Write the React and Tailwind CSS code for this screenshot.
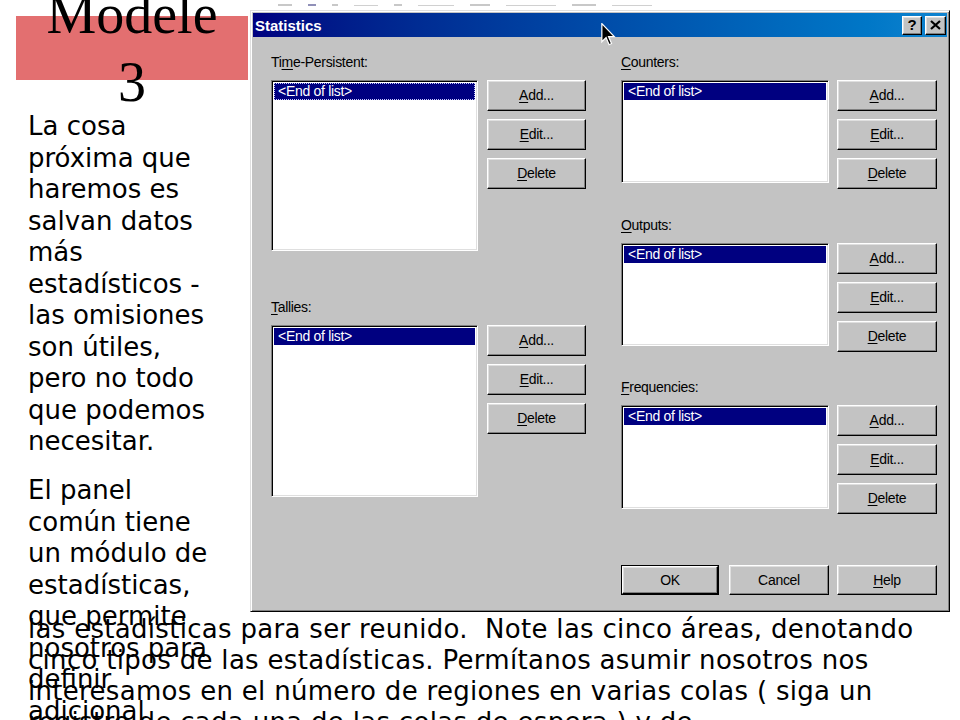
import React from "react";

const bevelBtn =
  "flex items-center justify-center bg-[#c3c3c3] border border-t-white border-l-white border-r-black border-b-black shadow-[inset_-1px_-1px_0_#808080,inset_1px_1px_0_#dfdfdf] text-[14px] text-black tracking-[-0.3px]";

// underline one letter of a label, the way Win9x marks its access keys
function Key({ text, at }) {
  if (at == null) return <span>{text}</span>;
  return (
    <span>
      {text.slice(0, at)}
      <span className="underline underline-offset-2">{text[at]}</span>
      {text.slice(at + 1)}
    </span>
  );
}

function Btn({ text, at, w = "w-[99px]", h = "h-[31px]" }) {
  return (
    <div className={`${bevelBtn} ${w} ${h}`}>
      <Key text={text} at={at} />
    </div>
  );
}

function ListBox({ w, h, focus }) {
  return (
    <div
      className={`${w} ${h} bg-white border border-t-[#808080] border-l-[#808080] border-r-white border-b-white shadow-[inset_1px_1px_0_#000,inset_-1px_-1px_0_#dfdfdf] p-[2px]`}
    >
      <div
        className={`h-[17px] bg-[#000080] text-white text-[14px] leading-[15px] pl-[3px] tracking-[-0.3px] border ${
          focus ? "border-dotted border-[#c8c8ff]" : "border-[#000080]"
        }`}
      >
        {"<End of list>"}
      </div>
    </div>
  );
}

function Section({ label, at, listW, listH, gap, btnW, focus, className = "" }) {
  return (
    <div className={className}>
      <div className="h-[16px] text-[14px] leading-[16px] tracking-[-0.3px] text-black">
        <Key text={label} at={at} />
      </div>
      <div className={`mt-[10px] flex items-start ${gap}`}>
        <ListBox w={listW} h={listH} focus={focus} />
        <div className="flex flex-col gap-[8px]">
          <Btn text="Add..." at={0} w={btnW} />
          <Btn text="Edit..." at={0} w={btnW} />
          <Btn text="Delete" at={0} w={btnW} />
        </div>
      </div>
    </div>
  );
}

function Dialog() {
  return (
    <div className="w-[700px] h-[602px] ml-[2px] bg-[#c3c3c3] border border-t-[#dfdfdf] border-l-[#dfdfdf] border-r-black border-b-black shadow-[inset_1px_1px_0_#fff,inset_-1px_-1px_0_#808080] p-[2px] flex flex-col font-['Liberation_Sans',Arial,sans-serif]">
      <div className="h-[24px] shrink-0 bg-gradient-to-r from-[#000080] to-[#1084d0] flex items-center justify-between pl-[2px] pr-[1px]">
        <span className="text-white font-bold text-[15px] leading-none">Statistics</span>
        <div className="flex gap-[3px]">
          <div className={`${bevelBtn} w-[20px] h-[19px] font-bold text-[15px]`}>?</div>
          <div className={`${bevelBtn} w-[21px] h-[19px]`}>
            <svg width="11" height="10" viewBox="0 0 11 10">
              <path d="M1 1 L10 9 M10 1 L1 9" stroke="#000" strokeWidth="2.2" />
            </svg>
          </div>
        </div>
      </div>

      <div className="flex gap-[35px] pl-[18px] pt-[17px]">
        <div className="flex flex-col">
          <Section label="Time-Persistent:" at={2} listW="w-[207px]" listH="h-[171px]" gap="gap-[9px]" btnW="w-[99px]" focus />
          <Section label="Tallies:" at={0} listW="w-[207px]" listH="h-[172px]" gap="gap-[9px]" btnW="w-[99px]" className="mt-[48px]" />
        </div>
        <div className="flex flex-col">
          <Section label="Counters:" at={0} listW="w-[208px]" listH="h-[103px]" gap="gap-[8px]" btnW="w-[100px]" />
          <Section label="Outputs:" at={0} listW="w-[208px]" listH="h-[103px]" gap="gap-[8px]" btnW="w-[100px]" className="mt-[28px]" />
          <Section label="Frequencies:" at={0} listW="w-[208px]" listH="h-[104px]" gap="gap-[8px]" btnW="w-[100px]" className="mt-[27px]" />
          <div className="mt-[51px] flex">
            <div className="border border-black">
              <Btn text="OK" w="w-[96px]" h="h-[28px]" />
            </div>
            <div className="ml-[10px]">
              <Btn text="Cancel" w="w-[100px]" h="h-[30px]" />
            </div>
            <div className="ml-[8px]">
              <Btn text="Help" at={0} w="w-[100px]" h="h-[30px]" />
            </div>
          </div>
        </div>
      </div>
    </div>
  );
}

export default function App() {
  return (
    <div className="relative w-[960px] h-[720px] overflow-hidden bg-white flex text-black font-['DejaVu_Sans',Verdana,sans-serif]">
      <aside className="w-[248px] shrink-0 pl-4 pt-4">
        <div className="w-[232px] h-[64px] bg-[#e36f70] flex items-center justify-center">
          <h1 className="font-['Liberation_Serif','Times_New_Roman',serif] text-[56px] leading-[68px] text-center font-normal">
            Modele
            <br />3
          </h1>
        </div>
        <div className="pl-3 mt-[31px] text-[26px] leading-[31.5px] whitespace-nowrap">
          <p>
            La cosa<br />próxima que<br />haremos es<br />salvan datos<br />más<br />estadísticos -<br />las omisiones<br />son útiles,<br />pero no todo<br />que podemos<br />necesitar.
          </p>
          <p className="mt-[17.5px]">
            El panel<br />común tiene<br />un módulo de<br />estadísticas,<br />que permite<br />nosotros para<br />definir<br />adicional
          </p>
        </div>
      </aside>

      <div className="flex flex-col">
        <div className="h-[10px] flex items-center gap-[16px] pl-[30px]">
          <span className="w-[14px] h-[2px] bg-[#c8c8c8]" />
          <span className="w-[8px] h-[2px] bg-[#9090b8]" />
          <span className="w-[6px] h-[2px] bg-[#c8c8c8]" />
          <span className="w-[24px] h-[1px] bg-[#d0d0d0]" />
          <span className="w-[8px] h-[2px] bg-[#c8c8c8]" />
          <span className="w-[36px] h-[1px] bg-[#d0d0d0]" />
          <span className="w-[20px] h-[2px] bg-[#c8c8c8]" />
          <span className="w-[50px] h-[1px] bg-[#d0d0d0]" />
          <span className="w-[24px] h-[2px] bg-[#c8c8c8]" />
          <span className="w-[40px] h-[1px] bg-[#d0d0d0]" />
        </div>
        <Dialog />
      </div>

      <svg className="absolute left-[601px] top-[23px]" width="15" height="23" viewBox="0 0 12 19">
        <path d="M0.5 0.5 L0.5 15.5 L4 12 L6.5 18 L8.5 17 L6 11.2 L10.8 11.2 Z" fill="#000" stroke="#fff" strokeWidth="1" />
      </svg>

      <p className="absolute left-[28px] top-[614px] text-[26px] leading-[31px] tracking-[0.3px] whitespace-nowrap">
        las estadísticas para ser reunido.{"\u00a0 "}Note las cinco áreas, denotando
        <br />
        cinco tipos de las estadísticas. Permítanos asumir nosotros nos
        <br />
        interesamos en el número de regiones en varias colas ( siga un
        <br />
        registro de cada una de las colas de espera ) y de
      </p>
    </div>
  );
}
